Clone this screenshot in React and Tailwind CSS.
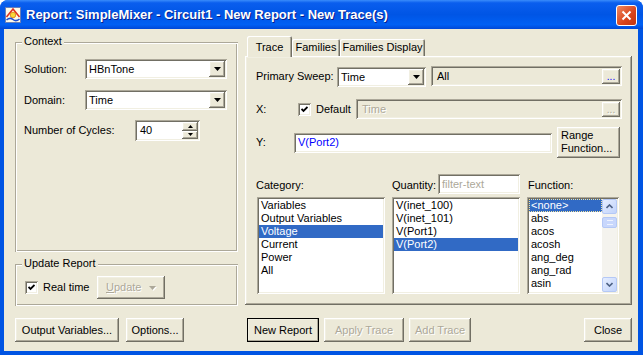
const raised =
  "shadow-[inset_-1px_-1px_0_#716F64,inset_1px_1px_0_#FFFFFF,inset_-2px_-2px_0_#ACA899,inset_2px_2px_0_#F1EFE2]";
const sunken =
  "shadow-[inset_1px_1px_0_#ACA899,inset_-1px_-1px_0_#FFFFFF,inset_2px_2px_0_#716F64,inset_-2px_-2px_0_#F1EFE2]";
const etched =
  "shadow-[inset_1px_1px_0_#ACA899,inset_-1px_-1px_0_#FFFFFF,inset_2px_2px_0_#FFFFFF,inset_-2px_-2px_0_#ACA899]";
const disabledText = "text-[#ACA899] [text-shadow:1px_1px_0_#FFFFFF]";

function Arrow({ color = "#000" }) {
  return (
    <svg width="7" height="4" viewBox="0 0 7 4">
      <polygon points="0,0 7,0 3.5,4" fill={color} />
    </svg>
  );
}

function DropBtn() {
  return (
    <div className={`flex h-[16px] w-[16px] items-center justify-center bg-[#ECE9D8] ${raised}`}>
      <Arrow />
    </div>
  );
}

function Combo({ value, w }) {
  return (
    <div className={`flex h-[20px] items-center bg-white p-[2px] ${w} ${sunken}`}>
      <div className="flex-1 pl-[2px] leading-[16px]">{value}</div>
      <DropBtn />
    </div>
  );
}

function Check() {
  return (
    <div className={`flex h-[13px] w-[13px] items-center justify-center bg-white ${sunken}`}>
      <svg width="7" height="7" viewBox="0 0 7 7">
        <polyline points="0.5,3 2.5,5 6.5,1" fill="none" stroke="#000" strokeWidth="1.8" />
      </svg>
    </div>
  );
}

function Btn({ children, w, def, disabled, className = "" }) {
  return (
    <div
      className={`flex h-[24px] items-center justify-center bg-[#ECE9D8] ${w} ${raised} ${
        def ? "outline outline-1 -outline-offset-1 outline-black" : ""
      } ${disabled ? disabledText : ""} ${className}`}
    >
      {children}
    </div>
  );
}

function Dots({ disabled }) {
  return (
    <div
      className={`flex h-[15px] w-[18px] items-end justify-center bg-[#ECE9D8] pb-[2px] text-[10px] leading-[10px] ${raised} ${
        disabled ? disabledText : "text-[#0000FF]"
      }`}
    >
      ...
    </div>
  );
}

function Group({ label, className, children }) {
  return (
    <div className={`relative ${etched} ${className}`}>
      <span className="absolute left-[7px] top-[-7px] bg-[#ECE9D8] px-[2px] leading-[13px]">{label}</span>
      {children}
    </div>
  );
}

function ListBox({ items, selected, w, focus, scroll }) {
  return (
    <div className={`flex h-[97px] bg-white p-[2px] ${w} ${sunken}`}>
      <div className="flex-1 overflow-hidden">
        {items.map((it) => (
          <div
            key={it}
            className={`h-[13px] whitespace-nowrap px-[2px] leading-[13px] ${
              it === selected ? "bg-[#316AC5] text-white" : ""
            } ${it === selected && focus ? "outline outline-1 -outline-offset-1 outline-dotted outline-[#F1E3A0]" : ""}`}
          >
            {it}
          </div>
        ))}
      </div>
      {scroll && (
        <div className="flex w-[15px] flex-col bg-[#F4F3EE]">
          <ScrollBtn up />
          <div className="mt-[3px] flex h-[11px] items-center justify-center rounded-[2px] border border-[#B4C8F6] bg-[#C8D7FC]">
            <div className="h-[5px] w-[6px] border-y border-[#EEF3FF]" />
          </div>
          <div className="flex-1" />
          <ScrollBtn />
        </div>
      )}
    </div>
  );
}

function ScrollBtn({ up }) {
  return (
    <div className="flex h-[15px] items-center justify-center rounded-[2px] border border-[#B4C8F6] bg-[linear-gradient(135deg,#E6EEFF,#C1D3FB)]">
      <svg width="7" height="5" viewBox="0 0 7 5">
        <polyline
          points={up ? "0.5,4 3.5,1 6.5,4" : "0.5,1 3.5,4 6.5,1"}
          fill="none"
          stroke="#4D6185"
          strokeWidth="1.6"
        />
      </svg>
    </div>
  );
}

function AppIcon() {
  return (
    <svg width="16" height="16" viewBox="0 0 16 16">
      <rect x="0.5" y="0.5" width="15" height="15" fill="#FFFBE8" stroke="#6A7FB8" />
      <path d="M1.5 10 L8 2 L14.5 10" fill="none" stroke="#E0301E" strokeWidth="1.6" />
      <circle cx="8" cy="8" r="2.8" fill="#F8D838" stroke="#D87A10" strokeWidth="0.8" />
      <path d="M1.5 13 Q5 10 8 12.5 T14.5 12" fill="none" stroke="#2050D0" strokeWidth="1.6" />
    </svg>
  );
}

function CloseBtn() {
  return (
    <div className="mt-[5px] flex h-[21px] w-[21px] items-center justify-center rounded-[3px] border border-white bg-[linear-gradient(135deg,#F08A62,#D8431B_60%,#C2350F)]">
      <svg width="11" height="11" viewBox="0 0 11 11">
        <path d="M1.5 1.5 L9.5 9.5 M9.5 1.5 L1.5 9.5" stroke="#FFFFFF" strokeWidth="2" />
      </svg>
    </div>
  );
}

export default function App() {
  return (
    <div className="flex h-[355px] w-[643px] flex-col overflow-hidden rounded-t-[8px] bg-[#0054E3] font-['Liberation_Sans',Arial,sans-serif] text-[11px] text-black">
      {/* title bar */}
      <div className="flex h-[29px] items-start bg-[linear-gradient(to_bottom,#3A8CFB_0%,#0A5EEE_10%,#0055E5_50%,#0060F4_85%,#0048D6_100%)] pr-[6px]">
        <div className="ml-[5px] mt-[7px]">
          <AppIcon />
        </div>
        <div className="ml-[5px] mt-[7px] flex-1 text-[13px] font-bold leading-[16px] text-white [text-shadow:1px_1px_0_#0A1E8A]">
          Report: SimpleMixer - Circuit1 - New Report - New Trace(s)
        </div>
        <CloseBtn />
      </div>

      {/* client */}
      <div className="mb-[4px] ml-[4px] mr-[5px] flex h-[322px] flex-col bg-[#ECE9D8]">
        <div className="flex h-[277px]">
          {/* left column */}
          <div className="ml-[11px] flex w-[223px] flex-col">
            <Group label="Context" className="mt-[13px] h-[210px] px-[9px] pt-[17px]">
              <div className="flex h-[20px] items-center">
                <span className="w-[61px]">Solution:</span>
                <Combo value="HBnTone" w="w-[142px]" />
              </div>
              <div className="mt-[11px] flex h-[20px] items-center">
                <span className="w-[61px]">Domain:</span>
                <Combo value="Time" w="w-[142px]" />
              </div>
              <div className="mt-[10px] flex h-[21px] items-center">
                <span className="w-[111px]">Number of Cycles:</span>
                <div className={`flex h-[21px] w-[65px] items-center bg-white p-[2px] ${sunken}`}>
                  <span className="flex-1 pl-[3px]">40</span>
                  <div className="flex h-[17px] w-[16px] flex-col">
                    <div className={`flex flex-1 items-center justify-center ${raised} bg-[#ECE9D8]`}>
                      <svg width="5" height="3" viewBox="0 0 5 3">
                        <polygon points="0,3 5,3 2.5,0" fill="#000" />
                      </svg>
                    </div>
                    <div className={`flex flex-1 items-center justify-center ${raised} bg-[#ECE9D8]`}>
                      <svg width="5" height="3" viewBox="0 0 5 3">
                        <polygon points="0,0 5,0 2.5,3" fill="#000" />
                      </svg>
                    </div>
                  </div>
                </div>
              </div>
            </Group>
            <Group label="Update Report" className="mt-[12px] flex h-[42px] items-center px-[10px] pt-[5px]">
              <Check />
              <span className="ml-[5px] w-[54px]">Real time</span>
              <div className={`flex h-[23px] w-[68px] items-center bg-[#ECE9D8] pl-[9px] ${raised} ${disabledText}`}>
                <span className="flex-1">
                  <span className="underline">U</span>pdate
                </span>
                <span className="mr-[9px] drop-shadow-[1px_1px_0_#FFFFFF]">
                  <Arrow color="#ACA899" />
                </span>
              </div>
            </Group>
          </div>

          {/* right column: tab control */}
          <div className="ml-[7px] flex w-[387px] flex-col">
            <div className="flex h-[27px] items-end pl-[2px]">
              <div className="relative z-10 -mb-[1px] flex h-[21px] w-[45px] items-start justify-center rounded-t-[2px] bg-[#ECE9D8] pt-[3px] shadow-[inset_1px_1px_0_#FFFFFF,inset_-1px_0_0_#716F64,inset_-2px_0_0_#ACA899]">
                Trace
              </div>
              <div className="flex h-[17px] w-[48px] items-center justify-center rounded-t-[2px] bg-[#ECE9D8] shadow-[inset_1px_1px_0_#FFFFFF,inset_-1px_0_0_#716F64,inset_-2px_0_0_#ACA899]">
                Families
              </div>
              <div className="flex h-[17px] w-[85px] items-center justify-center rounded-t-[2px] bg-[#ECE9D8] shadow-[inset_1px_1px_0_#FFFFFF,inset_-1px_0_0_#716F64,inset_-2px_0_0_#ACA899]">
                Families Display
              </div>
            </div>
            <div className={`flex h-[249px] flex-col ${raised}`}>
              <div className="ml-[11px] mt-[10px] flex h-[21px] items-center">
                <span className="w-[81px]">Primary Sweep:</span>
                <Combo value="Time" w="w-[89px]" />
                <div className={`ml-[5px] flex h-[20px] w-[191px] items-center self-start p-[2px] ${sunken}`}>
                  <span className="flex-1 pl-[4px]">All</span>
                  <Dots />
                </div>
              </div>
              <div className="ml-[11px] mt-[12px] flex h-[20px] items-center">
                <span className="w-[42px]">X:</span>
                <Check />
                <span className="ml-[5px] w-[40px]">Default</span>
                <div className={`flex h-[20px] w-[266px] items-center p-[2px] ${sunken}`}>
                  <span className={`flex-1 pl-[4px] ${disabledText}`}>Time</span>
                  <Dots disabled />
                </div>
              </div>
              <div className="ml-[11px] mt-[8px] flex h-[31px] items-center">
                <span className="w-[38px]">Y:</span>
                <div className={`flex h-[20px] w-[258px] items-center bg-white p-[2px] ${sunken}`}>
                  <span className="pl-[2px] text-[#0000FF]">V(Port2)</span>
                </div>
                <div className={`ml-[5px] h-[31px] w-[63px] bg-[#ECE9D8] pl-[4px] pt-[2px] leading-[13px] ${raised}`}>
                  Range
                  <br />
                  Function...
                </div>
              </div>
              <div className="ml-[11px] mt-[16px] flex h-[20px] items-end">
                <span className="mb-[2px] w-[136px] leading-[13px]">Category:</span>
                <span className="mb-[2px] w-[46px] leading-[13px]">Quantity:</span>
                <div className={`flex h-[20px] w-[82px] items-center bg-white p-[2px] ${sunken}`}>
                  <span className="pl-[2px] text-[#ACA899]">filter-text</span>
                </div>
                <span className="mb-[2px] ml-[8px] leading-[13px]">Function:</span>
              </div>
              <div className="ml-[12px] mt-[3px] flex">
                <ListBox
                  w="w-[128px]"
                  items={["Variables", "Output Variables", "Voltage", "Current", "Power", "All"]}
                  selected="Voltage"
                />
                <div className="ml-[7px]">
                  <ListBox
                    w="w-[128px]"
                    items={["V(inet_100)", "V(inet_101)", "V(Port1)", "V(Port2)"]}
                    selected="V(Port2)"
                  />
                </div>
                <div className="ml-[7px]">
                  <ListBox
                    w="w-[92px]"
                    items={["<none>", "abs", "acos", "acosh", "ang_deg", "ang_rad", "asin"]}
                    selected="<none>"
                    focus
                    scroll
                  />
                </div>
              </div>
            </div>
          </div>
        </div>

        {/* bottom buttons */}
        <div className="ml-[11px] mr-[6px] mt-[12px] flex h-[24px]">
          <Btn w="w-[104px]">Output Variables...</Btn>
          <Btn w="w-[58px]" className="ml-[7px]">
            Options...
          </Btn>
          <Btn w="w-[72px]" def className="ml-[63px]">
            New Report
          </Btn>
          <Btn w="w-[80px]" disabled className="ml-[5px]">
            Apply Trace
          </Btn>
          <Btn w="w-[62px]" disabled className="ml-[5px]">
            Add Trace
          </Btn>
          <Btn w="w-[48px]" className="ml-auto">
            Close
          </Btn>
        </div>
      </div>
    </div>
  );
}
